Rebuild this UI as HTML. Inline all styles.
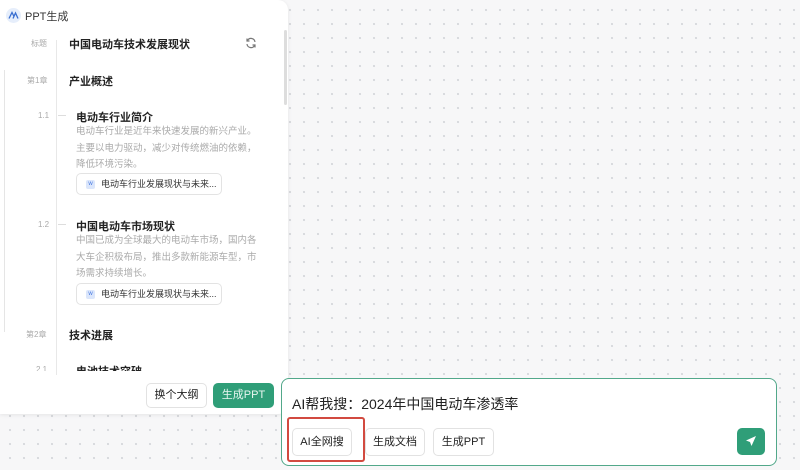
<!DOCTYPE html>
<html><head><meta charset="utf-8"><style>
*{margin:0;padding:0;box-sizing:border-box}
body{width:800px;height:470px;overflow:hidden;position:relative;font-family:"Liberation Sans","Noto Sans CJK SC",sans-serif;background:#f7f7f8;background-image:radial-gradient(circle,#d6d8dc 0.9px,transparent 1.3px);background-size:14px 14px;background-position:3px 3px}
.a{position:absolute}
.panel{left:0;top:0;width:288px;height:414px;background:#fff;border-radius:0 10px 10px 0;box-shadow:0 1px 4px rgba(0,0,0,.08)}
.lbl{font-size:8px;color:#aaa}
.h{font-size:11px;font-weight:bold;color:#222}
.d{font-size:9.5px;color:#aaa;line-height:16.5px;width:184px}
.chip{border:1px solid #e3e3e3;border-radius:5px;height:22px;font-size:9px;color:#333;line-height:20px;padding-left:24px;background:#fff}
.chip:before{content:"w";position:absolute;left:9px;top:6px;width:9px;height:9px;background:#dbe6fb;color:#4a7be0;font-size:6px;line-height:9px;text-align:center;border-radius:2px}
.btn{border:1px solid #e2e2e2;border-radius:5px;font-size:11px;text-align:center;background:#fff;color:#222}
</style></head><body>
<div class="a panel"></div>
<div class="a" style="left:4px;top:70px;width:1px;height:262px;background:#e5e5e5"></div>
<div class="a" style="left:56px;top:40px;width:1px;height:335px;background:#e8e8e8"></div>
<div class="a" style="left:284px;top:30px;width:3px;height:75px;background:#ddd;border-radius:2px"></div>
<svg class="a" style="left:6px;top:8px" width="15" height="15" viewBox="0 0 15 15"><circle cx="7.5" cy="7.5" r="7.5" fill="#e6eefb"/><path d="M3 10.5 L6 4.5 L8 8.5 M7 10.5 L9.5 5 L12 10.5" stroke="#3a6fd0" stroke-width="1.3" fill="none"/></svg>
<div class="a" style="left:25px;top:8px;font-size:11px;color:#333">PPT生成</div>
<div class="a lbl" style="left:31px;top:38px">标题</div>
<div class="a h" style="left:69px;top:36px">中国电动车技术发展现状</div>
<svg class="a" style="left:245px;top:37px" width="12" height="12" viewBox="0 0 12 12"><path d="M10 5A4 4 0 0 0 2.5 3.5M2 7A4 4 0 0 0 9.5 8.5" stroke="#777" stroke-width="1.2" fill="none"/><path d="M2 1.5V4H4.5M10 10.5V8H7.5" stroke="#777" stroke-width="1.2" fill="none"/></svg>
<div class="a lbl" style="left:27px;top:75px">第1章</div>
<div class="a h" style="left:69px;top:73px">产业概述</div>
<div class="a lbl" style="left:38px;top:111px">1.1</div>
<div class="a" style="left:58px;top:115px;width:8px;height:1px;background:#ddd"></div>
<div class="a h" style="left:76px;top:109px">电动车行业简介</div>
<div class="a d" style="left:76px;top:124px">电动车行业是近年来快速发展的新兴产业。主要以电力驱动，减少对传统燃油的依赖，降低环境污染。</div>
<div class="a chip" style="left:76px;top:173px;width:146px">电动车行业发展现状与未来...</div>
<div class="a lbl" style="left:38px;top:220px">1.2</div>
<div class="a" style="left:58px;top:224px;width:8px;height:1px;background:#ddd"></div>
<div class="a h" style="left:76px;top:218px">中国电动车市场现状</div>
<div class="a d" style="left:76px;top:233px">中国已成为全球最大的电动车市场，国内各大车企积极布局，推出多款新能源车型，市场需求持续增长。</div>
<div class="a chip" style="left:76px;top:283px;width:146px">电动车行业发展现状与未来...</div>
<div class="a lbl" style="left:26px;top:329px">第2章</div>
<div class="a h" style="left:69px;top:327px">技术进展</div>
<div class="a lbl" style="left:36px;top:365px;height:6px;overflow:hidden">2.1</div>
<div class="a h" style="left:76px;top:363px;height:8px;overflow:hidden">电池技术突破</div>
<div class="a btn" style="left:146px;top:383px;width:61px;height:25px;line-height:23px">换个大纲</div>
<div class="a btn" style="left:213px;top:383px;width:61px;height:25px;line-height:25px;background:#2f9e78;border:none;color:#e8f6f0">生成PPT</div>
<div class="a" style="left:281px;top:378px;width:496px;height:88px;background:#fff;border:1.5px solid #52a88a;border-radius:8px"></div>
<div class="a" style="left:292px;top:394px;font-size:14px;color:#222">AI帮我搜：2024年中国电动车渗透率</div>
<div class="a btn" style="left:292px;top:428px;width:60px;height:28px;line-height:26px">AI全网搜</div>
<div class="a" style="left:287px;top:417px;width:78px;height:45px;border:2px solid #d24a40;border-radius:3px"></div>
<div class="a btn" style="left:365px;top:428px;width:60px;height:28px;line-height:26px">生成文档</div>
<div class="a btn" style="left:433px;top:428px;width:61px;height:28px;line-height:26px">生成PPT</div>
<div class="a" style="left:737px;top:428px;width:28px;height:27px;background:#2f9e78;border-radius:5px"></div>
<svg class="a" style="left:743px;top:433px" width="16" height="16" viewBox="0 0 16 16"><path d="M13 3L3 7.5L7 9L8.5 13Z" fill="#fff"/></svg>
</body></html>
